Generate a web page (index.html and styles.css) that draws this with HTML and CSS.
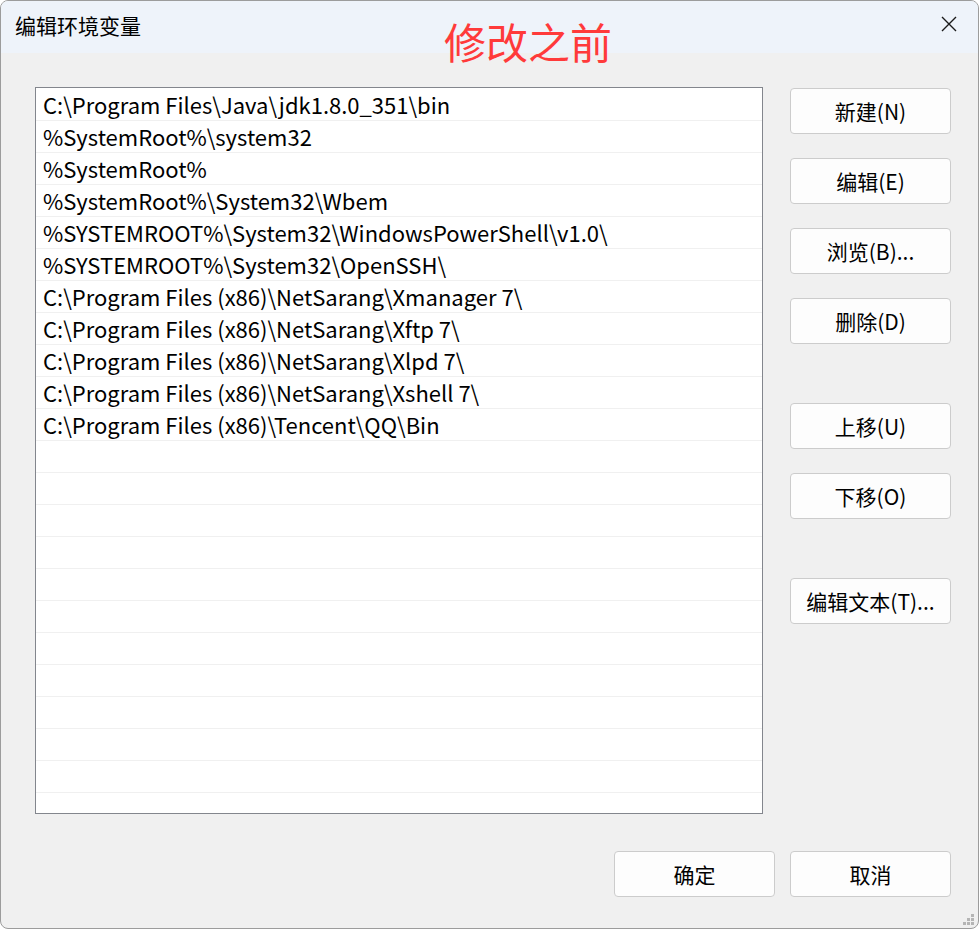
FILE: index.html
```html
<!DOCTYPE html>
<html lang="zh-CN">
  <head>
    <meta charset="UTF-8" />
    <title>编辑环境变量</title>
    <link rel="stylesheet" href="styles.css">
  </head>
  <body>
    <div class="window">
      <div class="titlebar">
        <span class="title">编辑环境变量</span>
        <span class="stamp">修改之前</span>
        <svg class="close" width="18" height="18" viewBox="0 0 18 18">
          <path d="M2 2 L16 16 M16 2 L2 16" stroke="#1a1a1a" stroke-width="1.4" fill="none" />
        </svg>
      </div>

      <div class="content">
        <div class="main">
          <div class="list" id="list"></div>

          <div class="side">
            <button class="btn">新建(N)</button>
            <button class="btn">编辑(E)</button>
            <button class="btn">浏览(B)...</button>
            <button class="btn">删除(D)</button>
            <button class="btn gap-lg">上移(U)</button>
            <button class="btn">下移(O)</button>
            <button class="btn gap-lg">编辑文本(T)...</button>
          </div>
        </div>

        <div class="footer">
          <button class="btn">确定</button>
          <button class="btn">取消</button>
        </div>
      </div>

      <div class="grip">
        <i style="grid-area: 1 / 3"></i>
        <i style="grid-area: 2 / 2"></i>
        <i style="grid-area: 2 / 3"></i>
        <i style="grid-area: 3 / 1"></i>
        <i style="grid-area: 3 / 2"></i>
        <i style="grid-area: 3 / 3"></i>
      </div>
    </div>

    <script>
      const paths = [
        "C:\\Program Files\\Java\\jdk1.8.0_351\\bin",
        "%SystemRoot%\\system32",
        "%SystemRoot%",
        "%SystemRoot%\\System32\\Wbem",
        "%SYSTEMROOT%\\System32\\WindowsPowerShell\\v1.0\\",
        "%SYSTEMROOT%\\System32\\OpenSSH\\",
        "C:\\Program Files (x86)\\NetSarang\\Xmanager 7\\",
        "C:\\Program Files (x86)\\NetSarang\\Xftp 7\\",
        "C:\\Program Files (x86)\\NetSarang\\Xlpd 7\\",
        "C:\\Program Files (x86)\\NetSarang\\Xshell 7\\",
        "C:\\Program Files (x86)\\Tencent\\QQ\\Bin"
      ];

      const list = document.getElementById("list");
      for (let i = 0; i < 23; i++) {
        const row = document.createElement("div");
        row.className = "row";
        row.textContent = paths[i] || "";
        list.appendChild(row);
      }
    </script>
  </body>
</html>
```

FILE: styles.css
```css
html,
body {
  margin: 0;
  background: #ffffff;
}
body {
  font-family: "Noto Sans CJK SC", "Noto Sans", sans-serif;
  color: #000;
}
.window {
  position: relative;
  width: 977px;
  height: 927px;
  border: 1px solid #9c9c9c;
  border-radius: 8px;
  background: #f0f0f0;
  overflow: hidden;
}
.titlebar {
  height: 52px;
  background: #eef3fa;
  display: flex;
  align-items: center;
  padding: 0 20px 0 14px;
  position: relative;
}
.title {
  font-size: 21px;
  margin-top: -4px;
}
.stamp {
  position: absolute;
  left: 443px;
  top: 11px;
  font-size: 42px;
  line-height: 58px;
  color: #ff3a3a;
}
.close {
  margin-left: auto;
  margin-top: -6px;
}
.content {
  padding: 34px 27px 0 34px;
}
.main {
  display: flex;
  gap: 27px;
}
.list {
  width: 726px;
  height: 724px;
  padding-top: 1px;
  border: 1px solid #83868d;
  background: #fff;
  overflow: hidden;
}
.row {
  height: 31px;
  border-bottom: 1px solid #f0f0f0;
  padding-left: 7px;
  font-size: 22px;
  line-height: 31px;
  white-space: nowrap;
}
.side {
  display: flex;
  flex-direction: column;
  gap: 24px;
  padding-top: 1px;
}
.side .gap-lg {
  margin-top: 35px;
}
.btn {
  width: 161px;
  height: 46px;
  border: 1px solid #cccccc;
  border-radius: 4px;
  background: #fdfdfd;
  font-family: "Noto Sans CJK SC", "Noto Sans", sans-serif;
  font-size: 21px;
  color: #000;
  padding: 0;
}
.footer {
  display: flex;
  justify-content: flex-end;
  gap: 15px;
  margin-top: 37px;
}
.grip {
  position: absolute;
  right: 4px;
  bottom: 3px;
  display: grid;
  grid-template-columns: repeat(3, 3px);
  grid-template-rows: repeat(3, 3px);
  gap: 1px;
}
.grip i {
  background: #b5b5b5;
}
```
